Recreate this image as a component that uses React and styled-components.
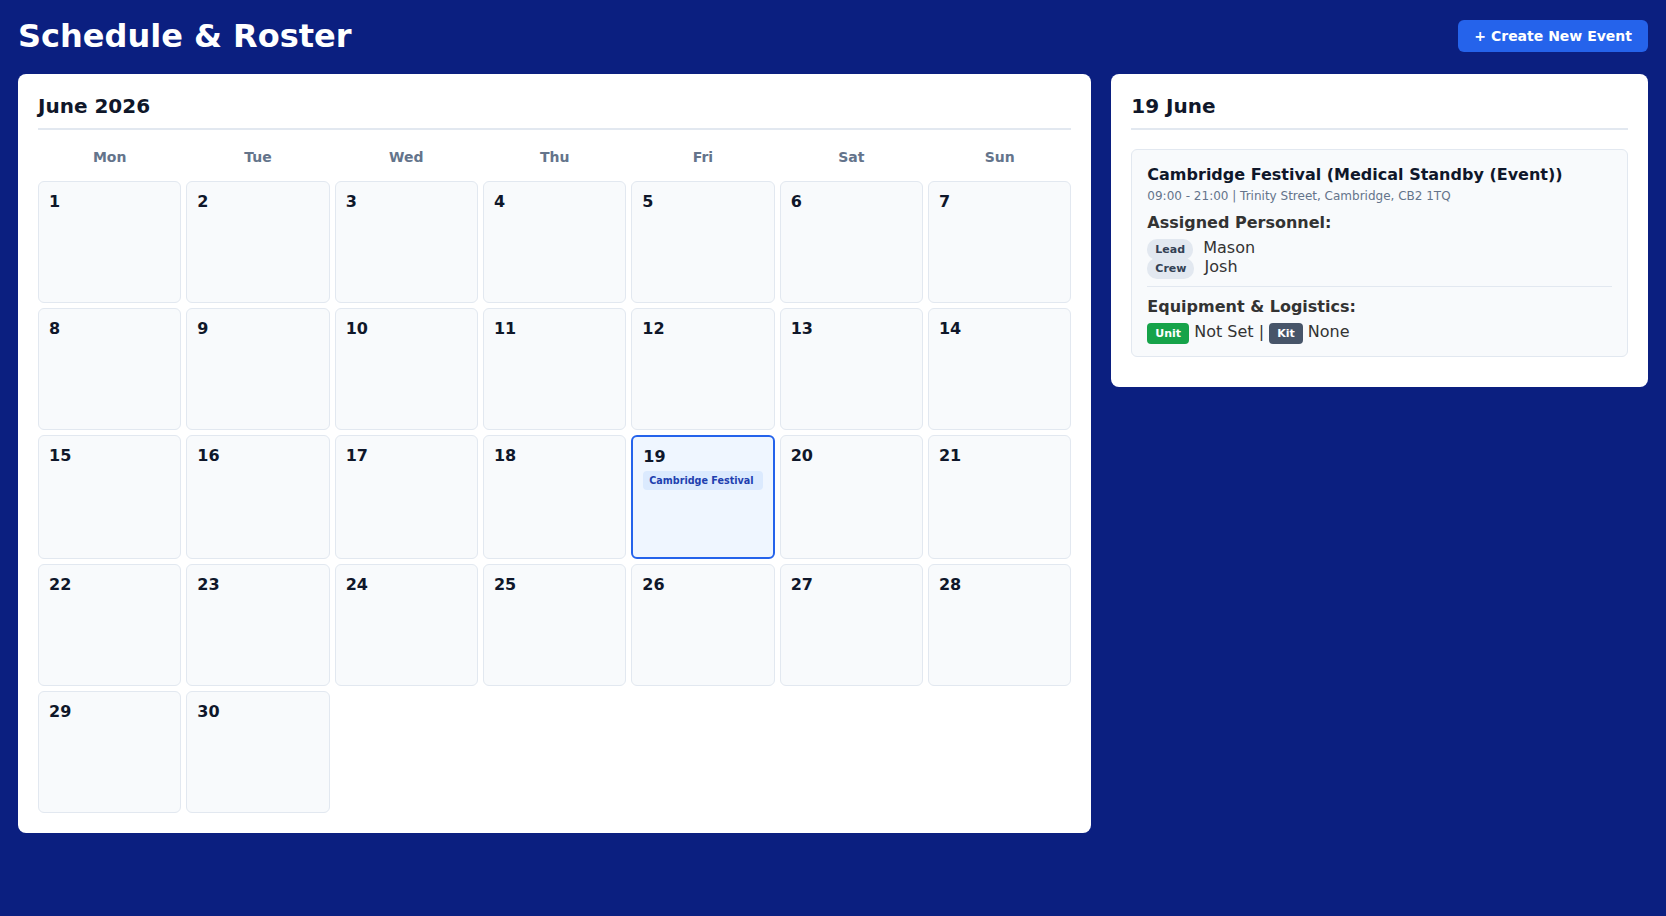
import React from "react";
import styled, { createGlobalStyle } from "styled-components";

const GlobalStyle = createGlobalStyle`
  body {
    margin: 0;
    background: #0b1f80;
    font-family: "DejaVu Sans", "Noto Sans", sans-serif;
  }
`;

const Page = styled.div`
  padding: 17px 18px 18px;
`;

const Header = styled.header`
  display: flex;
  justify-content: space-between;
  align-items: center;
  margin-bottom: 19px;
`;

const Title = styled.h1`
  margin: 0;
  font-size: 32px;
  font-weight: bold;
  color: #ffffff;
`;

const CreateButton = styled.button`
  background: #2563eb;
  color: #ffffff;
  border: none;
  border-radius: 6px;
  padding: 8px 16px;
  font-family: inherit;
  font-size: 14px;
  font-weight: bold;
  cursor: pointer;
`;

const Layout = styled.div`
  display: grid;
  grid-template-columns: 2fr 1fr;
  gap: 20px;
  align-items: start;
`;

const Card = styled.section`
  background: #ffffff;
  border-radius: 8px;
  padding: 20px;
`;

const CardTitle = styled.h2`
  margin: 0 0 10px;
  padding-bottom: 10px;
  border-bottom: 2px solid #e2e8f0;
  font-size: 20px;
  font-weight: bold;
  color: #0f172a;
`;

const CalendarGrid = styled.div`
  display: grid;
  grid-template-columns: repeat(7, 1fr);
  gap: 5px;
`;

const DayHeader = styled.div`
  text-align: center;
  padding: 9px 0 11px;
  font-size: 14px;
  font-weight: bold;
  color: #64748b;
`;

const DayCell = styled.div`
  min-height: 100px;
  padding: 10px;
  min-width: 0;
  border: ${(p) => (p.selected ? "2px solid #2563eb" : "1px solid #e2e8f0")};
  border-radius: 6px;
  background: ${(p) => (p.selected ? "#eff6ff" : "#f8fafc")};
  cursor: pointer;
`;

const DayNumber = styled.div`
  font-size: 16px;
  font-weight: bold;
  color: #0f172a;
`;

const EventChip = styled.div`
  margin-top: 5px;
  padding: 4px 6px;
  border-radius: 4px;
  background: #dbeafe;
  color: #1e40af;
  font-size: 9.6px;
  font-weight: bold;
  white-space: nowrap;
  overflow: hidden;
  text-overflow: ellipsis;
`;

const EventBox = styled.div`
  margin: 19px 0 10px;
  padding: 15px;
  border: 1px solid #e2e8f0;
  border-radius: 6px;
  background: #f8fafc;
`;

const EventTitle = styled.div`
  margin-bottom: 5px;
  font-size: 16px;
  font-weight: bold;
  color: #0f172a;
`;

const EventMeta = styled.div`
  margin-bottom: 10px;
  font-size: 12px;
  color: #64748b;
`;

const SectionLabel = styled.div`
  margin-bottom: 6px;
  font-size: 16px;
  font-weight: bold;
  color: #333333;
`;

const InfoRow = styled.div`
  font-size: 16px;
  color: #333333;
`;

const RoleTag = styled.span`
  margin-right: 5px;
  padding: 4px 8px;
  border-radius: 10px;
  background: #e2e8f0;
  color: #334155;
  font-size: 11px;
  font-weight: bold;
`;

const Tag = styled.span`
  padding: 4px 8px;
  border-radius: 4px;
  background: ${(p) => p.color};
  color: #ffffff;
  font-size: 11px;
  font-weight: bold;
`;

const Divider = styled.hr`
  margin: 10px 0;
  border: none;
  border-top: 1px solid #e2e8f0;
`;

const weekdays = ["Mon", "Tue", "Wed", "Thu", "Fri", "Sat", "Sun"];

const events = {
  19: { name: "Cambridge Festival" },
};

const crew = [
  { role: "Lead", name: "Mason" },
  { role: "Crew", name: "Josh" },
];

const App = () => {
  const selectedDay = 19;
  const days = Array.from({ length: 30 }, (_, i) => i + 1);

  return (
    <Page>
      <GlobalStyle />
      <Header>
        <Title>Schedule &amp; Roster</Title>
        <CreateButton>+ Create New Event</CreateButton>
      </Header>
      <Layout>
        <Card>
          <CardTitle>June 2026</CardTitle>
          <CalendarGrid>
            {weekdays.map((d) => (
              <DayHeader key={d}>{d}</DayHeader>
            ))}
            {days.map((day) => (
              <DayCell key={day} selected={day === selectedDay}>
                <DayNumber>{day}</DayNumber>
                {events[day] && <EventChip>{events[day].name}</EventChip>}
              </DayCell>
            ))}
          </CalendarGrid>
        </Card>
        <Card>
          <CardTitle>19 June</CardTitle>
          <EventBox>
            <EventTitle>Cambridge Festival (Medical Standby (Event))</EventTitle>
            <EventMeta>09:00 - 21:00 | Trinity Street, Cambridge, CB2 1TQ</EventMeta>
            <SectionLabel>Assigned Personnel:</SectionLabel>
            {crew.map((c) => (
              <InfoRow key={c.name}>
                <RoleTag>{c.role}</RoleTag> {c.name}
              </InfoRow>
            ))}
            <Divider />
            <SectionLabel>Equipment &amp; Logistics:</SectionLabel>
            <InfoRow>
              <Tag color="#16a34a">Unit</Tag> Not Set | <Tag color="#475569">Kit</Tag> None
            </InfoRow>
          </EventBox>
        </Card>
      </Layout>
    </Page>
  );
};

export default App;
